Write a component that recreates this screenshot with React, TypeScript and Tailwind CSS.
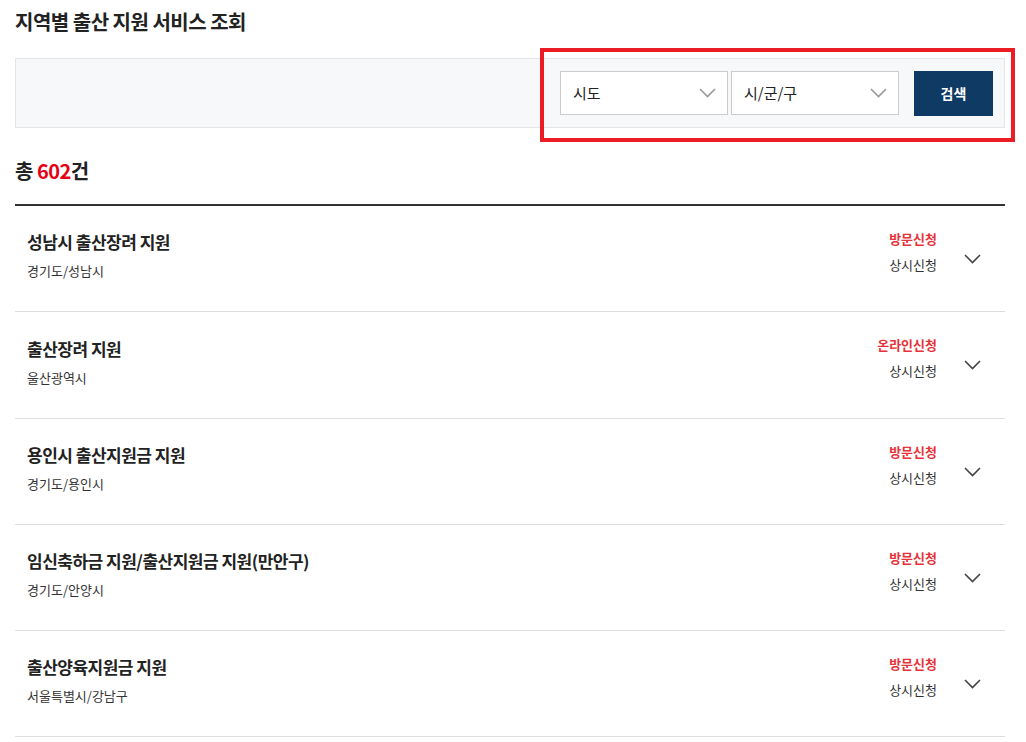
import React from "react";

type Item = {
  title: string;
  region: string;
  method: string;
};

const items: Item[] = [
  { title: "성남시 출산장려 지원", region: "경기도/성남시", method: "방문신청" },
  { title: "출산장려 지원", region: "울산광역시", method: "온라인신청" },
  { title: "용인시 출산지원금 지원", region: "경기도/용인시", method: "방문신청" },
  {
    title: "임신축하금 지원/출산지원금 지원(만안구)",
    region: "경기도/안양시",
    method: "방문신청",
  },
  { title: "출산양육지원금 지원", region: "서울특별시/강남구", method: "방문신청" },
];

function Chevron({ className }: { className?: string }) {
  return (
    <svg width="17" height="10" viewBox="0 0 17 10" fill="none" className={className}>
      <polyline points="1,1 8.5,8.5 16,1" stroke="currentColor" strokeWidth="1.6" />
    </svg>
  );
}

function SelectBox({ label }: { label: string }) {
  return (
    <div className="flex h-[44px] w-[168px] items-center justify-between border border-[#cccccc] bg-white pl-[12px] pr-[11px]">
      <span className="text-[15px] text-[#222]">{label}</span>
      <Chevron className="text-[#999]" />
    </div>
  );
}

export default function App() {
  return (
    <div
      className="relative min-h-screen bg-white pl-[15px] pr-[21px] pt-[8px] pb-4"
      style={{ fontFamily: '"Noto Sans CJK KR", "Noto Sans", sans-serif' }}
    >
      <h1 className="text-[20px] font-bold leading-[28px] tracking-[-0.5px] text-[#222]">
        지역별 출산 지원 서비스 조회
      </h1>

      <div className="mt-[22px] flex h-[70px] items-center justify-end border border-[#e5e6ea] bg-[#f7f8fa] pr-[11px]">
        <div className="flex items-center">
          <SelectBox label="시도" />
          <div className="w-[3px]" />
          <SelectBox label="시/군/구" />
          <button className="ml-[15px] h-[45px] w-[79px] bg-[#0f3a63] text-[14px] font-bold text-white">
            검색
          </button>
        </div>
      </div>

      <div className="mt-[29px] text-[20px] font-bold leading-[28px] tracking-[-0.5px] text-[#222]">
        총 <span className="text-[#e60012]">602</span>건
      </div>

      <ul className="mt-[19px] border-t-2 border-[#333]">
        {items.map((it, i) => (
          <li
            key={it.title}
            className={
              i === 1
                ? "flex items-center border-b border-[#dddddd] pl-[12px] pr-[24px] min-h-[107px]"
                : "flex items-center border-b border-[#dddddd] pl-[12px] pr-[24px]"
            }
          >
            <div className="flex-1 pt-[24px] pb-[30px]">
              <div className="text-[17px] font-bold leading-[24px] tracking-[-0.5px] text-[#222]">
                {it.title}
              </div>
              <div className="mt-[7px] text-[13px] leading-[20px] text-[#333]">{it.region}</div>
            </div>
            <div className="flex flex-col items-end self-start pt-[23px]">
              <span className="text-[13px] font-bold leading-[20px] text-[#e6323a]">{it.method}</span>
              <span className="mt-[6px] text-[13px] leading-[20px] text-[#333]">상시신청</span>
            </div>
            <Chevron className="ml-[27px] text-[#444]" />
          </li>
        ))}
      </ul>

      <div className="pointer-events-none absolute left-[540px] top-[48px] h-[94px] w-[475px] border-4 border-[#ec1c24]" />
    </div>
  );
}
